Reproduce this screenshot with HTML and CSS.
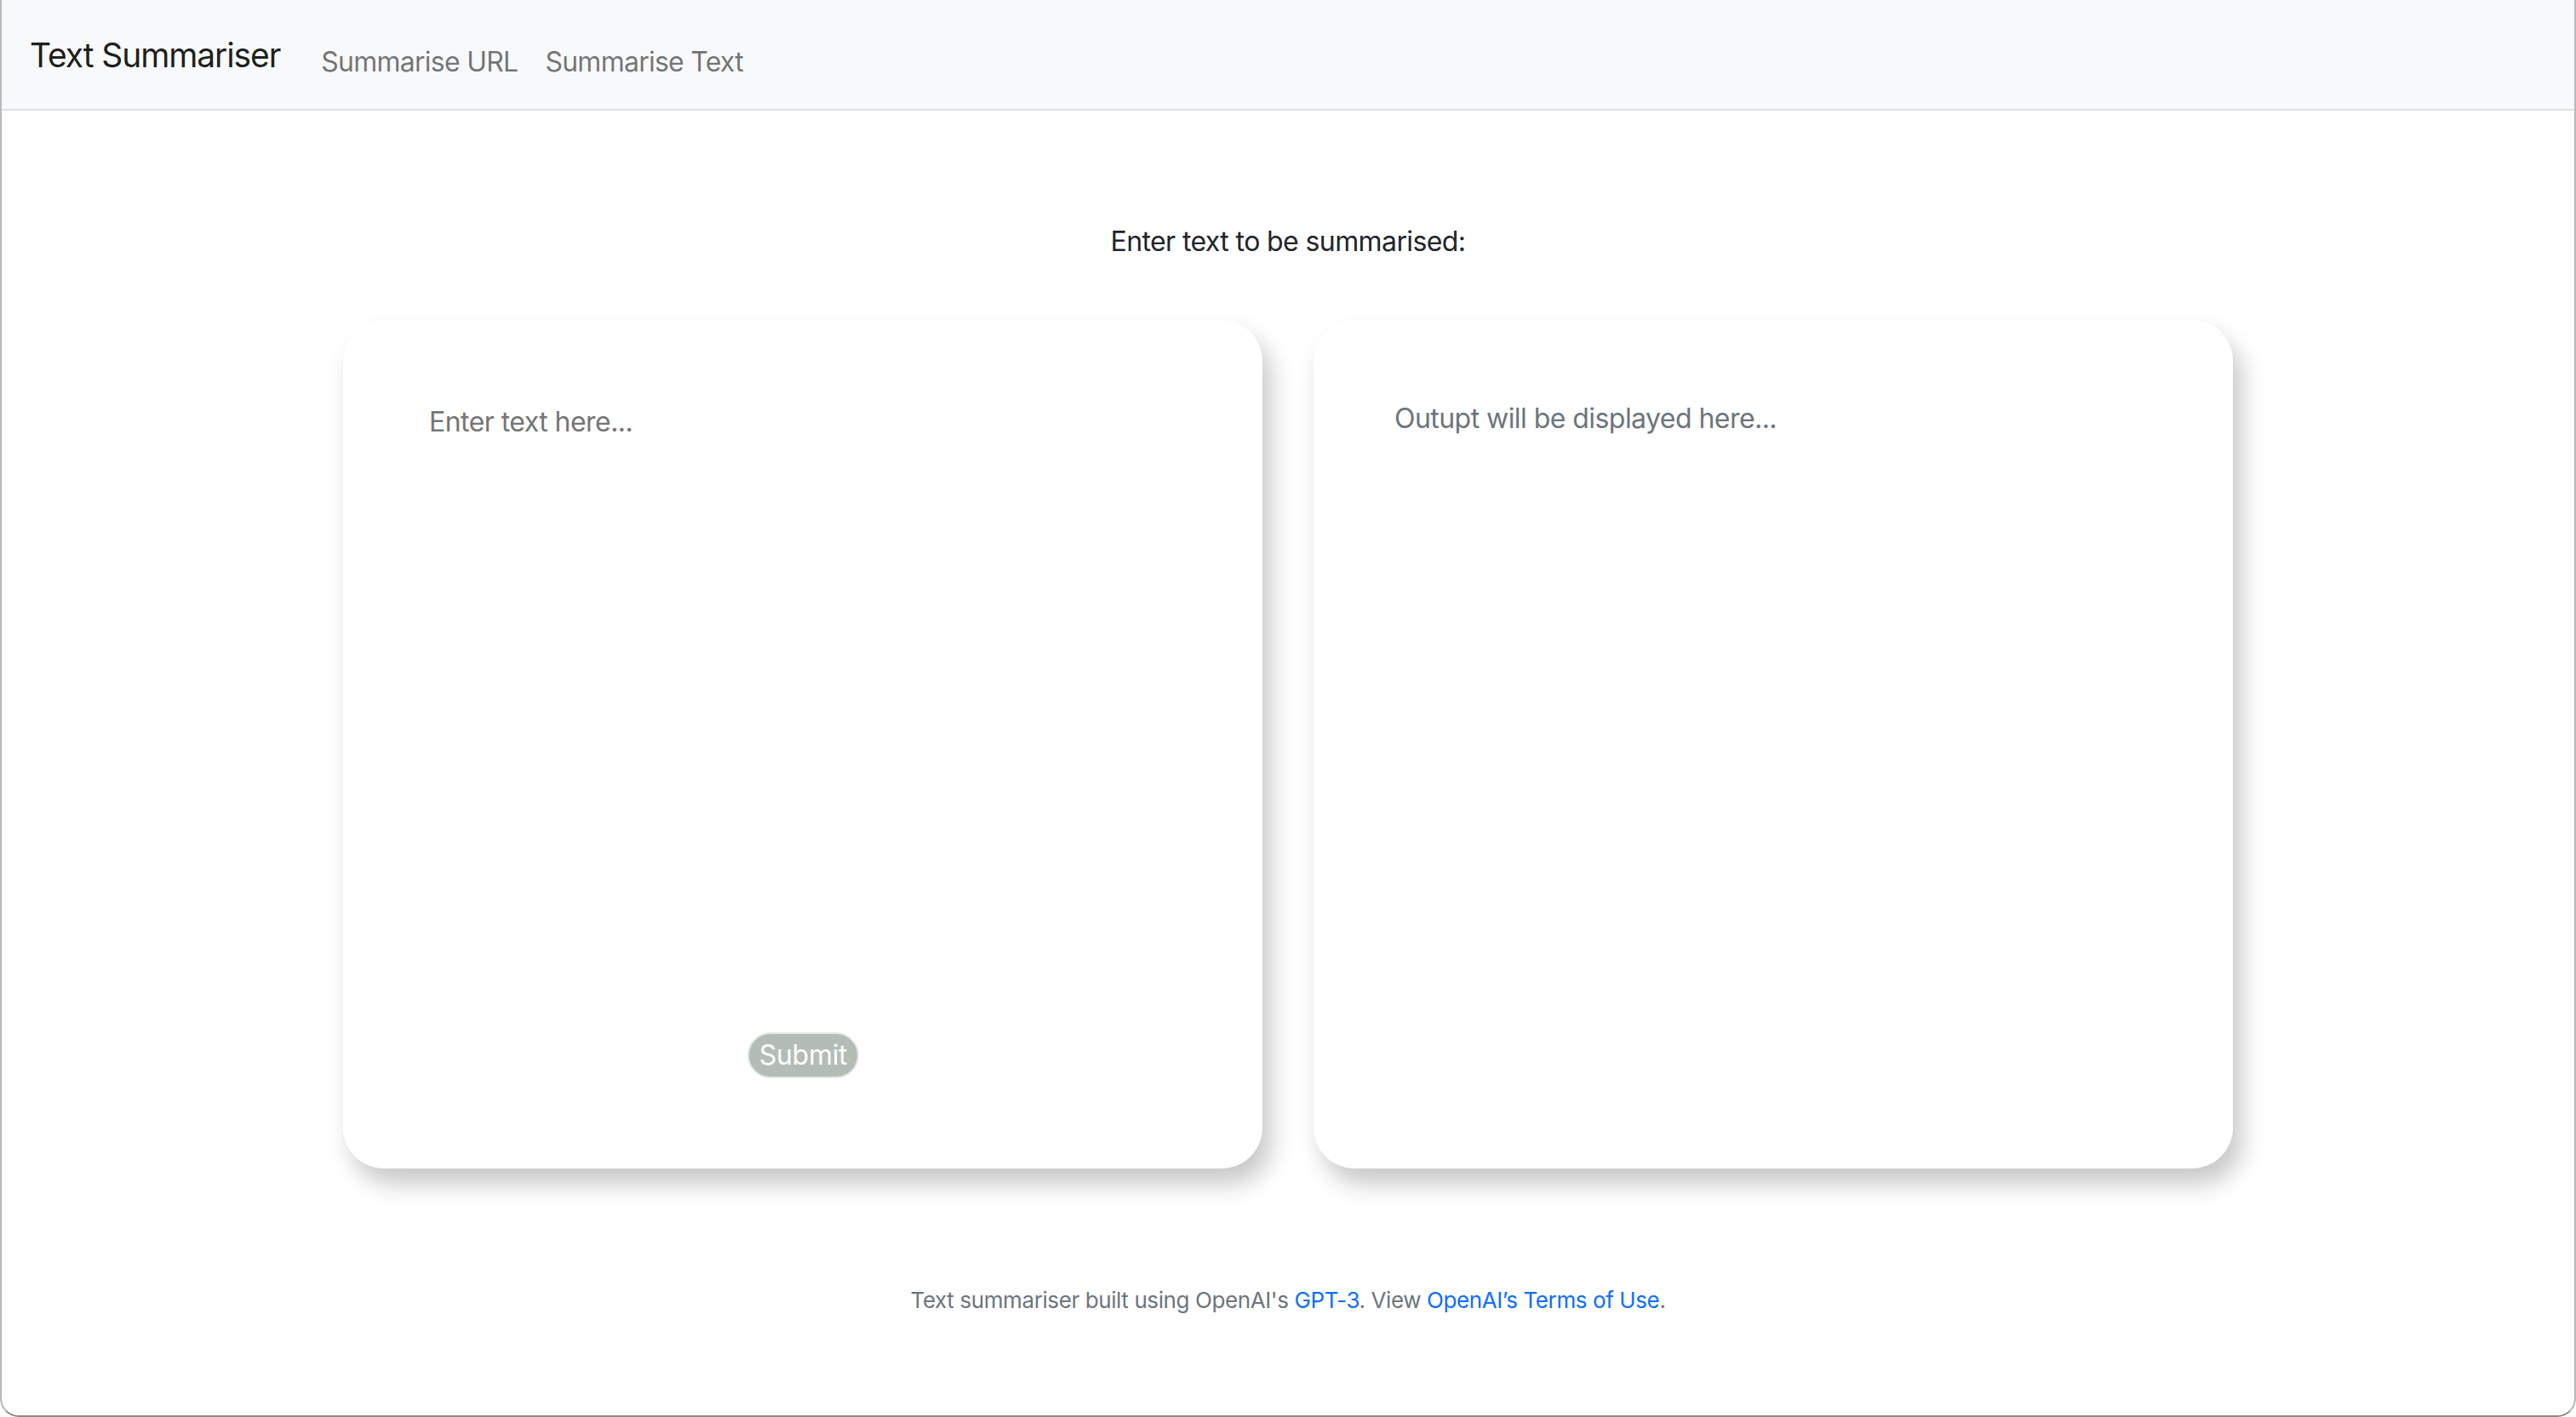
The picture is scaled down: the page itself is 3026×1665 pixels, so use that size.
FILE: index.html
```html
<!DOCTYPE html>
<html lang="en">
<head>
<meta charset="utf-8">
<title>Text Summariser</title>
<link rel="stylesheet" href="styles.css">
</head>
<body>
<div class="window">
  <nav class="navbar">
    <a class="brand" href="#">Text Summariser</a>
    <ul class="nav-links">
      <li><a href="#">Summarise URL</a></li>
      <li><a href="#">Summarise Text</a></li>
    </ul>
  </nav>
  <main class="content">
    <p class="prompt">Enter text to be summarised:</p>
    <div class="panels">
      <form class="card input-card">
        <textarea class="text-input" placeholder="Enter text here..."></textarea>
        <button class="submit" type="button">Submit</button>
      </form>
      <div class="card output-card">
        <p class="output">Outupt will be displayed here...</p>
      </div>
    </div>
    <footer class="footer">Text summariser built using OpenAI's <a href="#">GPT-3</a>. View <a href="#">OpenAI’s Terms of Use</a>.</footer>
  </main>
</div>
</body>
</html>
```
FILE: styles.css
```css
html, body {
  margin: 0;
  padding: 0;
  background: #ffffff;
}

body {
  font-family: "Inter", "Roboto", "Liberation Sans", sans-serif;
  color: #212529;
}

.window {
  box-sizing: border-box;
  min-height: 100vh;
  border-left: 2px solid #b8b8b8;
  border-right: 2px solid #b8b8b8;
  border-bottom: 2px solid #8a8a8a;
  border-radius: 0 0 22px 22px;
  overflow: hidden;
  display: flex;
  flex-direction: column;
}

.navbar {
  box-sizing: border-box;
  height: 130px;
  background: #f8f9fa;
  border-bottom: 2px solid #dee2e6;
  display: flex;
  align-items: center;
  padding: 0 33px;
}

.brand {
  font-size: 39px;
  color: rgba(0, 0, 0, 0.9);
  text-decoration: none;
  letter-spacing: -1.1px;
  margin-right: 32px;
}

.nav-links {
  list-style: none;
  margin: 0;
  padding: 16px 0 0 0;
  display: flex;
}

.nav-links a {
  display: block;
  padding: 0 16px;
  font-size: 32px;
  color: rgba(0, 0, 0, 0.55);
  text-decoration: none;
  letter-spacing: -0.75px;
}

.content {
  display: flex;
  flex-direction: column;
  align-items: center;
}

.prompt {
  margin: 130px 0 0 0;
  font-size: 32px;
  line-height: 48px;
  color: #212529;
  letter-spacing: -0.6px;
}

.panels {
  margin-top: 68px;
  display: flex;
  gap: 60px;
}

.card {
  box-sizing: border-box;
  width: 1080px;
  height: 997px;
  background: #ffffff;
  border-radius: 48px;
  box-shadow: 10px 18px 28px rgba(0, 0, 0, 0.22);
  margin: 0;
}

.input-card {
  display: flex;
  flex-direction: column;
  padding: 96px 96px 106px 101px;
}

.text-input {
  flex: 1;
  border: none;
  outline: none;
  resize: none;
  padding: 0;
  margin: 0;
  font-family: inherit;
  font-size: 32px;
  line-height: 48px;
  letter-spacing: -0.55px;
  color: #212529;
  background: transparent;
}

.text-input::placeholder {
  color: #757575;
}

.submit {
  align-self: center;
  margin-top: auto;
  box-sizing: border-box;
  height: 54px;
  padding: 0 12px;
  border: 2px solid #e4e6e4;
  border-radius: 999px;
  background: #b4bdb5;
  color: #ffffff;
  font-family: inherit;
  font-size: 32px;
  line-height: 48px;
  letter-spacing: -0.3px;
  margin-left: -4px;
}

.output-card {
  padding: 92px 96px 96px 95px;
}

.output {
  margin: 0;
  font-size: 32px;
  line-height: 48px;
  color: #6c757d;
  letter-spacing: -0.55px;
}

.footer {
  margin-top: 134px;
  font-size: 26px;
  line-height: 42px;
  color: #6c757d;
  letter-spacing: -0.4px;
}

.footer a {
  color: #0d6efd;
  text-decoration: none;
}
```
